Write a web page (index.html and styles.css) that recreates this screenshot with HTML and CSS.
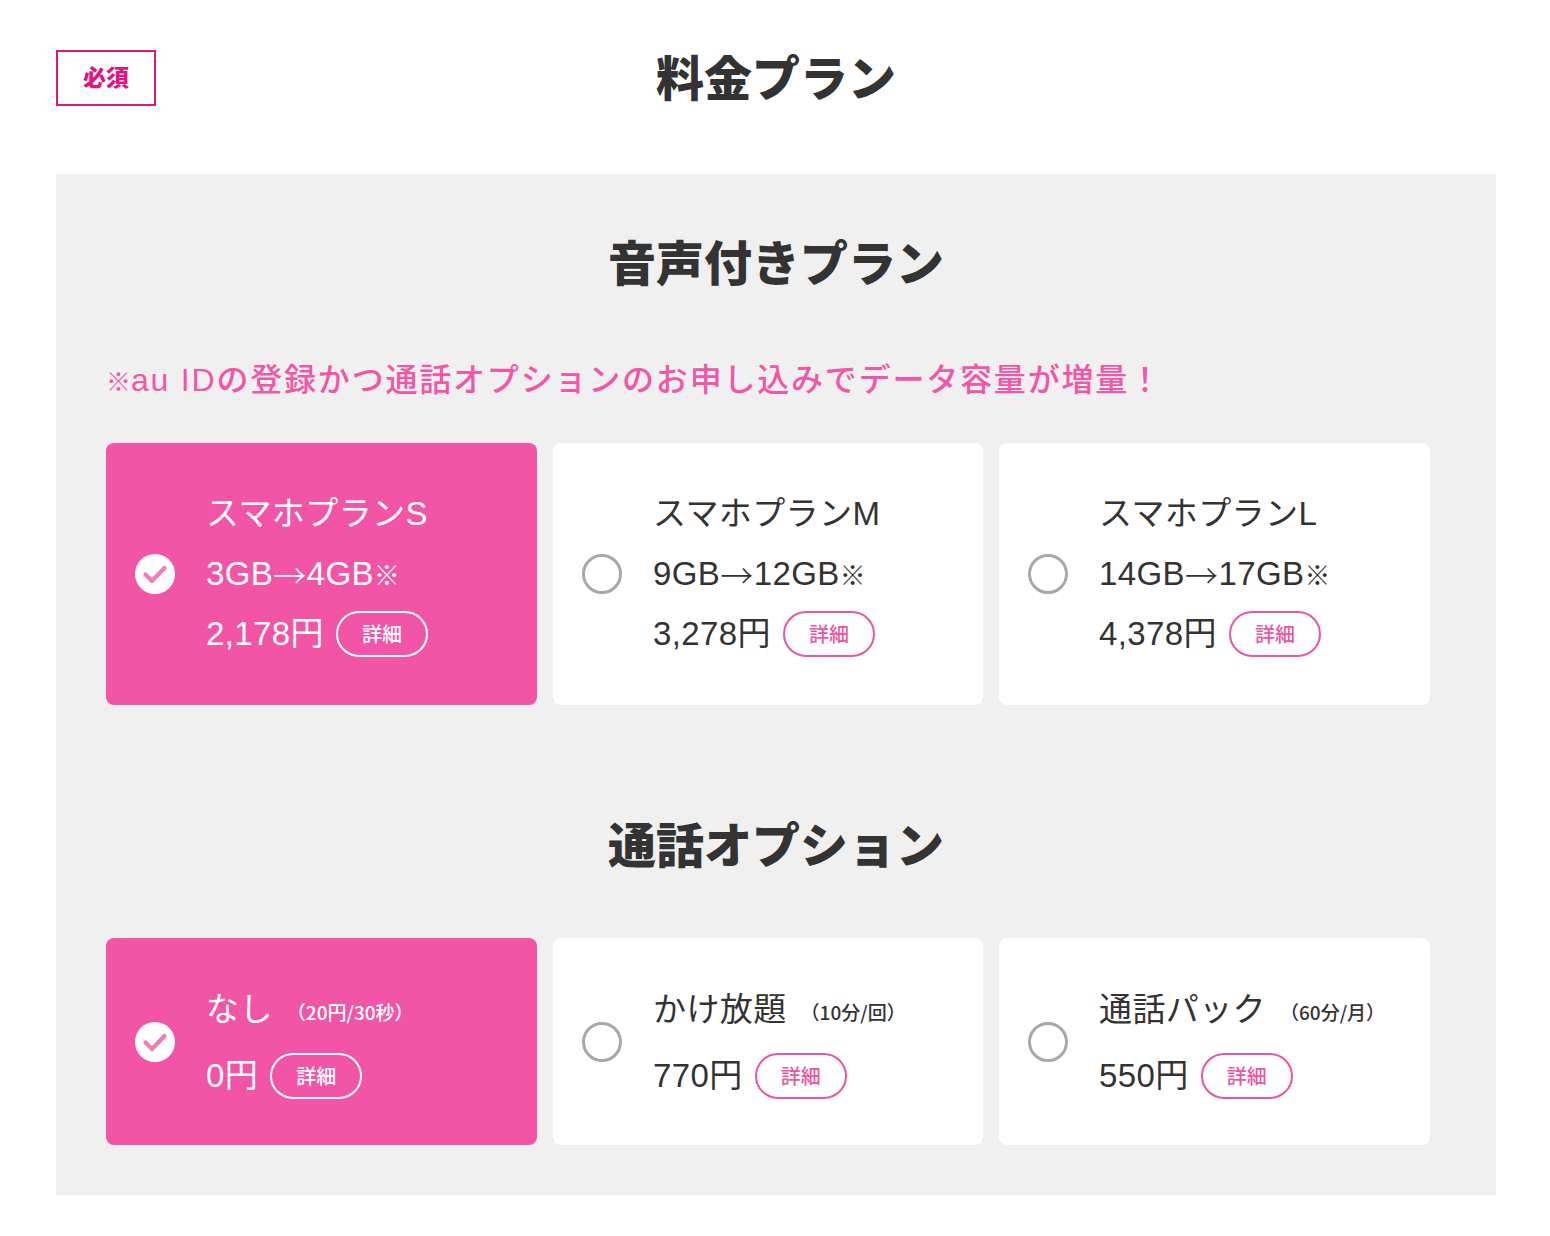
FILE: index.html
```html
<!DOCTYPE html>
<html lang="ja">
<head>
<meta charset="utf-8">
<title>料金プラン</title>
<link rel="stylesheet" href="styles.css">
</head>
<body>
<header class="top">
  <div class="badge-cell"><span class="badge">必須</span></div>
  <h1 class="title">料金プラン</h1>
  <div></div>
</header>
<section class="panel">
  <h2 class="heading">音声付きプラン</h2>
  <p class="note"><span class="kome">※</span>au IDの登録かつ通話オプションのお申し込みでデータ容量が増量！</p>
  <div class="cards plans">
    <div class="card selected">
      <span class="radio"><svg viewBox="0 0 40 40" width="40" height="40"><circle cx="20" cy="20" r="20" fill="#fff"/><path d="M10.5 20.5 L17 27 L29.5 14" fill="none" stroke="#f47bb9" stroke-width="4.2" stroke-linecap="round" stroke-linejoin="round"/></svg></span>
      <div class="info">
        <div class="line">スマホプランS</div>
        <div class="line">3GB<span class="arrow">→</span>4GB<span class="kome">※</span></div>
        <div class="line">2,178円<span class="detail">詳細</span></div>
      </div>
    </div>
    <div class="card">
      <span class="radio"><span class="ring"></span></span>
      <div class="info">
        <div class="line">スマホプランM</div>
        <div class="line">9GB<span class="arrow">→</span>12GB<span class="kome">※</span></div>
        <div class="line">3,278円<span class="detail">詳細</span></div>
      </div>
    </div>
    <div class="card">
      <span class="radio"><span class="ring"></span></span>
      <div class="info">
        <div class="line">スマホプランL</div>
        <div class="line">14GB<span class="arrow">→</span>17GB<span class="kome">※</span></div>
        <div class="line">4,378円<span class="detail">詳細</span></div>
      </div>
    </div>
  </div>
  <h2 class="heading heading2">通話オプション</h2>
  <div class="cards options">
    <div class="card selected">
      <span class="radio"><svg viewBox="0 0 40 40" width="40" height="40"><circle cx="20" cy="20" r="20" fill="#fff"/><path d="M10.5 20.5 L17 27 L29.5 14" fill="none" stroke="#f47bb9" stroke-width="4.2" stroke-linecap="round" stroke-linejoin="round"/></svg></span>
      <div class="info">
        <div class="line">なし<small class="sub">（20円/30秒）</small></div>
        <div class="line">0円<span class="detail">詳細</span></div>
      </div>
    </div>
    <div class="card">
      <span class="radio"><span class="ring"></span></span>
      <div class="info">
        <div class="line">かけ放題<small class="sub">（10分/回）</small></div>
        <div class="line">770円<span class="detail">詳細</span></div>
      </div>
    </div>
    <div class="card">
      <span class="radio"><span class="ring"></span></span>
      <div class="info">
        <div class="line">通話パック<small class="sub">（60分/月）</small></div>
        <div class="line">550円<span class="detail">詳細</span></div>
      </div>
    </div>
  </div>
</section>
</body>
</html>
```
FILE: styles.css
```css
* { box-sizing: border-box; }
html, body { margin: 0; padding: 0; background: #fff; }
body {
  font-family: "Liberation Sans", "Noto Sans CJK JP", sans-serif;
  color: #333;
  width: 1550px;
}
.top {
  display: grid;
  grid-template-columns: 1fr auto 1fr;
  align-items: center;
  margin: 50px 54px 0 56px;
  height: 55px;
}
.badge-cell { display: flex; }
.badge {
  display: inline-flex;
  align-items: center;
  justify-content: center;
  width: 100px;
  height: 56px;
  border: 2px solid #d9197f;
  color: #e0137f;
  font-family: "Noto Sans CJK JP", sans-serif;
  font-weight: 900;
  font-size: 23px;
  line-height: 1;
  padding-bottom: 4px;
}
.title {
  margin: 0;
  font-family: "Noto Sans CJK JP", sans-serif;
  font-weight: 900;
  font-size: 48px;
  line-height: 50px;
  padding-bottom: 6px;
  color: #333;
}
.panel {
  margin: 69px 0 0 56px;
  width: 1440px;
  background: #f0f0f0;
  padding: 56px 50px 50px 50px;
}
.heading {
  margin: 0;
  text-align: center;
  font-family: "Noto Sans CJK JP", sans-serif;
  font-weight: 900;
  font-size: 48px;
  line-height: 60px;
  color: #333;
}
.heading2 { margin-top: 107px; }
.note {
  margin: 70px 0 0 0;
  color: #f256a6;
  font-size: 32px;
  font-weight: 500;
  letter-spacing: 1.8px;
  line-height: 40px;
  display: flex;
  align-items: center;
}
.kome {
  font-family: "Noto Sans CJK JP", sans-serif;
  font-size: 0.78em;
  font-weight: 900;
  letter-spacing: 0;
}
.arrow {
  font-family: "Noto Sans CJK JP", sans-serif;
  font-weight: 300;
}
.cards {
  display: grid;
  grid-template-columns: 431px 430px 431px;
  column-gap: 16px;
}
.plans { margin-top: 43px; }
.plans .card { height: 262px; }
.options { margin-top: 66px; }
.options .card { height: 207px; }
.card {
  background: #fff;
  border-radius: 8px;
  display: flex;
  align-items: center;
  padding-left: 29px;
  color: #333;
}
.card.selected { background: #f255a5; color: #fff; }
.radio {
  width: 40px;
  height: 40px;
  flex: none;
  display: flex;
  margin-right: 31px;
}
.ring {
  width: 40px;
  height: 40px;
  border-radius: 50%;
  border: 3.5px solid #a8a8a8;
  background: #fff;
}
.info { display: flex; flex-direction: column; }
.line {
  font-size: 33px;
  letter-spacing: 0.4px;
  line-height: 60px;
  display: flex;
  align-items: center;
  white-space: nowrap;
}
.options .line { line-height: 64px; }
.sub {
  font-family: "Noto Sans CJK JP", sans-serif;
  font-size: 19px;
  font-weight: 500;
  letter-spacing: 0;
  margin-left: 14px;
  padding-top: 4px;
}
.detail {
  display: inline-flex;
  align-items: center;
  justify-content: center;
  width: 92px;
  height: 46px;
  margin-left: 12px;
  border: 2px solid #e8579f;
  border-radius: 23px;
  color: #e8579f;
  font-family: "Noto Sans CJK JP", sans-serif;
  font-size: 20px;
  font-weight: 500;
  letter-spacing: 0;
  line-height: 1;
}
.selected .detail { border-color: #fff; color: #fff; }
```
